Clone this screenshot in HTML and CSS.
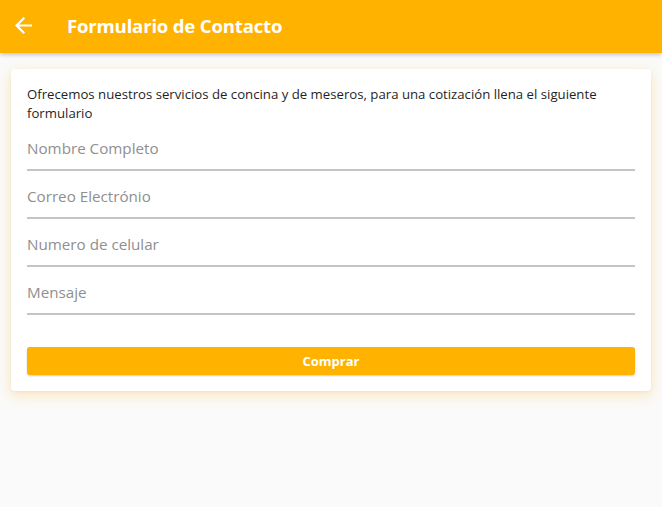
FILE: index.html
```html
<!DOCTYPE html>
<html lang="es">
<head>
<meta charset="utf-8">
<title>Formulario de Contacto</title>
<link rel="stylesheet" href="styles.css">
</head>
<body>
<header class="appbar">
  <button class="back" aria-label="Volver">
    <svg width="17" height="17" viewBox="4 4 16 16"><path d="M20 11H7.83l5.59-5.59L12 4l-8 8 8 8 1.41-1.41L7.83 13H20v-2z" fill="#fff"/></svg>
  </button>
  <h1 class="title">Formulario de Contacto</h1>
</header>
<main class="content">
  <section class="card">
    <p class="intro">Ofrecemos nuestros servicios de concina y de meseros, para una cotización llena el siguiente formulario</p>
    <div class="field"><input type="text" placeholder="Nombre Completo"></div>
    <div class="field"><input type="email" placeholder="Correo Electrónio"></div>
    <div class="field"><input type="tel" placeholder="Numero de celular"></div>
    <div class="field"><input type="text" placeholder="Mensaje"></div>
    <button class="submit">Comprar</button>
  </section>
</main>
</body>
</html>
```

FILE: styles.css
```css
* { box-sizing: border-box; }
html, body { margin: 0; padding: 0; }
body {
  background: #fafafa;
  font-family: "Open Sans", "Noto Sans", sans-serif;
  color: #212121;
  width: 662px;
  height: 507px;
  overflow: hidden;
}
.appbar {
  height: 53px;
  background: #ffb300;
  display: flex;
  align-items: center;
  box-shadow: 0 2px 4px rgba(0,0,0,0.2);
  position: relative;
  z-index: 1;
}
.back {
  background: none;
  border: 0;
  padding: 0;
  margin: -3px 0 0 15px;
  width: 17px;
  height: 17px;
  display: flex;
}
.title {
  margin: -2px 0 0 35px;
  color: #fff;
  font-size: 18.6px;
  font-weight: 700;
  letter-spacing: -0.2px;
}
.content {
  padding: 16px 11px;
}
.card {
  background: #fff;
  border-radius: 4px;
  padding: 16px 16px 16px;
  box-shadow: 0 4px 14px rgba(255, 190, 50, 0.32), 0 1px 3px rgba(0,0,0,0.06);
}
.intro {
  margin: 0;
  font-size: 13.2px;
  line-height: 19px;
  color: #1f1f1f;
}
.field {
  border-bottom: 2px solid #c4c4c4;
  height: 48px;
  display: flex;
  align-items: flex-end;
  padding-bottom: 11px;
}
.field input {
  border: 0;
  outline: 0;
  padding: 0;
  width: 100%;
  font-family: inherit;
  font-size: 15.2px;
  line-height: 20px;
  color: #212121;
  background: transparent;
}
.field input::placeholder { color: #8f8f8f; }
.submit {
  display: block;
  width: 100%;
  margin-top: 32px;
  height: 28px;
  border: 0;
  border-radius: 3px;
  background: #ffb300;
  color: #fff;
  font-family: inherit;
  font-size: 13px;
  font-weight: 700;
  box-shadow: 0 1px 2px rgba(0,0,0,0.2);
}
```
